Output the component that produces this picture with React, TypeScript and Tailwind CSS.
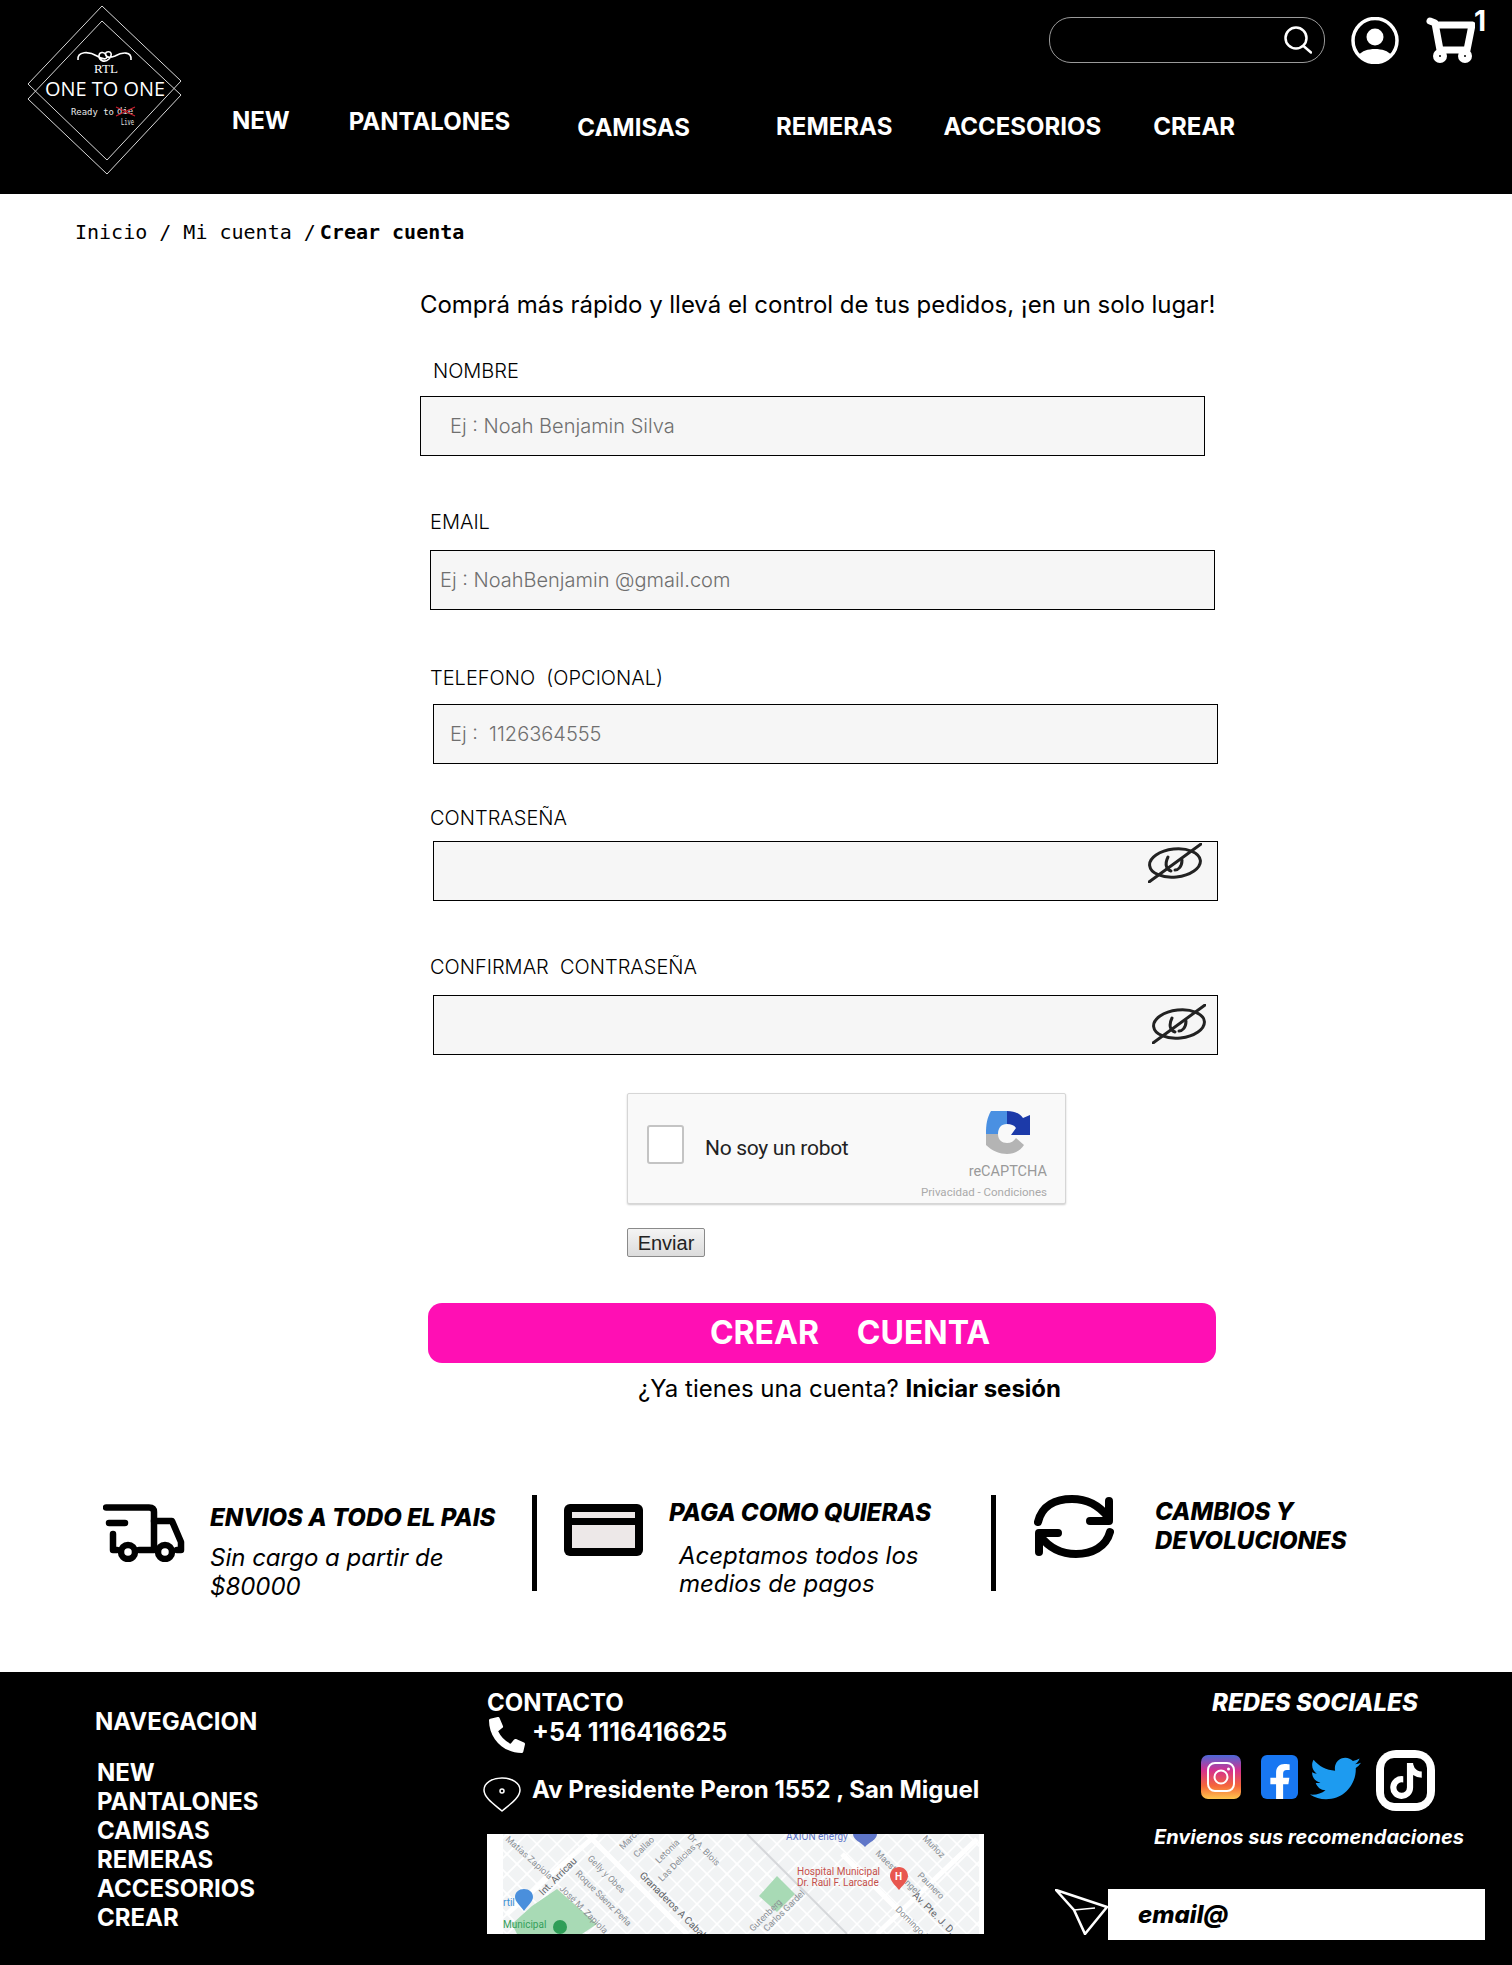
import { FaFacebookF, FaPhoneAlt, FaTiktok, FaTwitter } from 'react-icons/fa';

const navigation = ['NEW', 'PANTALONES', 'CAMISAS', 'REMERAS', 'ACCESORIOS', 'CREAR'];

const Logo = () => (
  <svg width="156" height="170" viewBox="0 0 156 170" className="block">
    <g fill="none" stroke="#d8d8d8" strokeWidth="1">
      <polygon points="75,1 154,76 80,155 1,79" />
      <polygon points="75,16 1,94 80,169 154,90" />
    </g>
    <path d="M51 55 C50 46 62 46 70 51 C76 55 82 55 79 50 C77 46 72 47 72 51 C72 56 78 58 82 54 C86 49 84 46 80 47 C77 48 78 55 88 51 C95 47 105 46 104 55" fill="none" stroke="#fff" strokeWidth="1.6" />
    <text x="79" y="68" fill="#fff" fontSize="13" textAnchor="middle" fontFamily="Liberation Serif, serif">RTL</text>
    <text x="78" y="91" fill="#fff" fontSize="20" textAnchor="middle" textLength="120" lengthAdjust="spacingAndGlyphs" fontFamily="Open Sans, sans-serif">ONE TO ONE</text>
    <text x="44" y="110" fill="#e8e8e8" fontSize="9" textLength="43" lengthAdjust="spacingAndGlyphs" fontFamily="DejaVu Sans Mono, monospace">Ready to</text>
    <text x="90" y="109" fill="#e8e8e8" fontSize="9" fontFamily="DejaVu Sans Mono, monospace">die</text>
    <path d="M89 102 L108 111 M89 111 L108 102" stroke="#c81e2e" strokeWidth="1.2" />
    <text x="94" y="120" fill="#e8e8e8" fontSize="8" textLength="13" lengthAdjust="spacingAndGlyphs" fontFamily="DejaVu Sans Mono, monospace">Live</text>
  </svg>
);

const SearchIcon = () => (
  <svg width="28" height="28" viewBox="0 0 28 28" fill="none" stroke="#fff" strokeWidth="2.5" strokeLinecap="round">
    <circle cx="12" cy="12" r="10.5" />
    <path d="M19.5 20 L27 26.5" />
  </svg>
);

const UserIcon = () => (
  <svg width="48" height="47" viewBox="0 0 48 47">
    <circle cx="24" cy="23.5" r="22" fill="none" stroke="#fff" strokeWidth="3.5" />
    <circle cx="24" cy="20" r="8.5" fill="#fff" />
    <path d="M8 38 C13 30 35 30 40 38 C32 48 16 48 8 38 Z" fill="#fff" />
  </svg>
);

const CartIcon = () => (
  <svg width="50" height="48" viewBox="0 0 50 48">
    <path d="M5 4 L10 6 L15 33 H42 L47 8 H11" fill="none" stroke="#fff" strokeWidth="7" strokeLinecap="round" strokeLinejoin="round" />
    <circle cx="15" cy="39" r="7" fill="#fff" />
    <circle cx="40" cy="39" r="7" fill="#fff" />
    <circle cx="15" cy="39" r="1" fill="#000" />
    <circle cx="40" cy="39" r="1" fill="#000" />
  </svg>
);

const EyeOff = () => (
  <svg width="54" height="40" viewBox="0 0 54 40" fill="none" stroke="#222" strokeWidth="3" strokeLinecap="round">
    <ellipse cx="27" cy="20" rx="25.5" ry="14" transform="rotate(-6 27 20)" />
    <path d="M1 39 L53 1" />
    <path d="M20 14 C16 22 19 27 23 28 M34 17 C34 24 30 27 27 27" />
  </svg>
);

const TruckIcon = () => (
  <svg width="82" height="58" viewBox="0 0 82 58" fill="none" stroke="#000" strokeWidth="6.5" strokeLinecap="round" strokeLinejoin="round">
    <path d="M3 3.5 H46 Q51 3.5 51 8 V46 H36" />
    <path d="M6 19 H22" />
    <path d="M10 30 V46 H14" />
    <path d="M51 17 H69 L78 38 V46 H74" />
    <circle cx="25" cy="48" r="7" />
    <circle cx="62" cy="48" r="7" />
  </svg>
);

const CardIcon = () => (
  <div className="w-[79px] h-[52px] bg-black rounded-[6px] px-[8px] pt-[8px] pb-[8px] flex flex-col gap-[7px]">
    <div className="h-[6px] bg-[#ede8e8]" />
    <div className="h-[23px] bg-[#ede8e8]" />
  </div>
);

const RefreshIcon = () => (
  <svg width="80" height="63" viewBox="0 0 80 63" fill="none" stroke="#000" strokeWidth="8" strokeLinecap="round" strokeLinejoin="round">
    <path d="M4 27 C8 10 22 4 38 4 C52 4 64 9 74 22" />
    <path d="M75 6 V26 H56" />
    <path d="M76 37 C72 52 58 59 42 59 C28 59 16 54 6 41" />
    <path d="M5 57 V38 H24" />
  </svg>
);

const PinIcon = () => (
  <svg width="38" height="35" viewBox="0 0 38 35" fill="none" stroke="#fff" strokeWidth="1.5">
    <path d="M19 1 C29 1 37 6 37 13 C37 21 26 28 19 34 C12 28 1 21 1 13 C1 6 9 1 19 1 Z" />
    <circle cx="19" cy="14" r="2" />
  </svg>
);

const PlaneIcon = () => (
  <svg width="53" height="46" viewBox="0 0 53 46" fill="none" stroke="#fff" strokeWidth="2.6" strokeLinejoin="round">
    <path d="M1 1 L52 18 L30 45 L19 21 Z" />
    <path d="M19 21 L40 19" strokeWidth="1.6" />
  </svg>
);

const InstagramIcon = () => (
  <svg width="40" height="44" viewBox="0 0 40 44">
    <defs>
      <linearGradient id="ig" x1="0" y1="1" x2="0" y2="0">
        <stop offset="0" stopColor="#fdc64d" />
        <stop offset="0.3" stopColor="#f5663a" />
        <stop offset="0.65" stopColor="#d5318f" />
        <stop offset="1" stopColor="#4c68d7" />
      </linearGradient>
    </defs>
    <rect width="40" height="44" rx="7" fill="url(#ig)" />
    <rect x="7" y="8" width="26" height="28" rx="7" fill="none" stroke="#fff" strokeWidth="2" />
    <circle cx="20" cy="22" r="6.5" fill="none" stroke="#fff" strokeWidth="2" />
    <circle cx="27.5" cy="14" r="1.5" fill="#fff" />
  </svg>
);

const RecaptchaLogo = () => (
  <svg width="46" height="44" viewBox="0 0 46 44">
    <path d="M6 1 L22 1 L22 14 C16 14 13 18 13 24 H1 C1 14 2 8 6 1 Z" fill="#4a90e2" />
    <path d="M22 1 C30 1 35 4 38 8 L45 5 V25 H26 L31 18 C29 15 26 14 22 14 Z" fill="#1c3aa9" />
    <path d="M1 24 H13 C13 30 17 33 22 33 C26 33 29 31 31 28 L39 35 C35 41 29 44 22 44 C15 44 7 41 1 35 Z" fill="#b4b4b4" />
    <rect x="1" y="24" width="8" height="11" fill="#b4b4b4" />
  </svg>
);

const StaticMap = () => {
  const roads = Array.from({ length: 34 }, (_, i) => -100 + i * 20);
  return (
    <svg width="497" height="100" viewBox="0 0 497 100" className="block bg-white">
      <rect x="16" width="476" height="100" fill="#f1f3f4" />
      <g stroke="#fff" strokeWidth="1.6">
        {roads.map((r) => (
          <path key={`a${r}`} d={`M${r} 0 L${r + 100} 100`} />
        ))}
        {roads.map((r) => (
          <path key={`b${r}`} d={`M${r + 60} 0 L${r - 40} 100`} />
        ))}
      </g>
      <path d="M100 0 L200 100 M355 20 L435 100 M20 80 L110 0 M390 100 L490 5" stroke="#fff" strokeWidth="5" />
      <path d="M260 0 L360 100" stroke="#d5d7da" strokeWidth="2" />
      <polygon points="45,72 70,55 110,90 95,100 30,100 25,90" fill="#a8dab5" />
      <polygon points="272,62 290,42 308,60 290,78" fill="#a8dab5" />
      <g fill="#8a8f94" fontSize="9" fontFamily="Roboto, sans-serif">
        <text x="18" y="6" transform="rotate(42 18 6)">Matías Zapiola</text>
        <text x="100" y="25" transform="rotate(45 100 25)">Gelly y Obes</text>
        <text x="88" y="40" transform="rotate(45 88 40)">Roque Sáenz Peña</text>
        <text x="72" y="55" transform="rotate(45 72 55)">José M. Zapiola</text>
        <text x="136" y="16" transform="rotate(-45 136 16)">Marcos</text>
        <text x="150" y="24" transform="rotate(-45 150 24)">Callao</text>
        <text x="172" y="30" transform="rotate(-45 172 30)">Letonia</text>
        <text x="175" y="48" transform="rotate(-45 175 48)">Las Delicias</text>
        <text x="200" y="3" transform="rotate(45 200 3)">Dr A. Blois</text>
        <text x="388" y="20" transform="rotate(45 388 20)">Maestro Ángel</text>
        <text x="435" y="5" transform="rotate(45 435 5)">Muñoz</text>
        <text x="430" y="42" transform="rotate(45 430 42)">Paunero</text>
        <text x="408" y="76" transform="rotate(45 408 76)">Domingo F.</text>
        <text x="266" y="98" transform="rotate(-45 266 98)">Gutenberg</text>
        <text x="280" y="98" transform="rotate(-45 280 98)">Carlos Gardel</text>
      </g>
      <g fill="#5f6368" fontSize="10" fontFamily="Roboto, sans-serif">
        <text x="152" y="42" transform="rotate(45 152 42)">Granaderos A Caball</text>
        <text x="425" y="62" transform="rotate(45 425 62)">Av. Pte. J. D.</text>
        <text x="56" y="62" transform="rotate(-45 56 62)">Int. Arricau</text>
      </g>
      <text x="310" y="41" fill="#c5504a" fontSize="10" fontFamily="Roboto, sans-serif">Hospital Municipal</text>
      <text x="310" y="52" fill="#c5504a" fontSize="10" fontFamily="Roboto, sans-serif">Dr. Raúl F. Larcade</text>
      <path d="M412 33 C417 33 421 37 421 42 C421 47 415 52 412 56 C409 52 403 47 403 42 C403 37 407 33 412 33 Z" fill="#e8574f" />
      <text x="408" y="46" fill="#fff" fontSize="10" fontWeight="700" fontFamily="Roboto, sans-serif">H</text>
      <text x="299" y="6" fill="#5f76c8" fontSize="10" fontFamily="Roboto, sans-serif">AXION energy</text>
      <path d="M366 0 H390 C390 6 382 8 378 13 C374 8 366 6 366 0 Z" fill="#5f76c8" />
      <text x="16" y="72" fill="#3c8fd5" fontSize="10" fontFamily="Roboto, sans-serif">rtil</text>
      <path d="M37 55 C42 55 46 58 46 63 C46 68 40 72 37 77 C34 72 28 68 28 63 C28 58 32 55 37 55 Z" fill="#4a8fdc" />
      <text x="16" y="94" fill="#34a05a" fontSize="10" fontFamily="Roboto, sans-serif">Municipal</text>
      <circle cx="73" cy="93" r="7" fill="#2f9e57" />
    </svg>
  );
};

const Field = ({ label, placeholder, labelClass, boxClass, eye }: { label: string; placeholder?: string; labelClass: string; boxClass: string; eye?: string }) => (
  <div>
    <div className={`text-[20px] leading-6 font-light text-black whitespace-pre ${labelClass}`}>{label}</div>
    <div className={`h-[60px] w-[785px] bg-[#f6f6f6] border border-black flex items-center ${boxClass}`}>
      <span className="text-[20px] font-light text-[#6f6f6f] whitespace-pre">{placeholder}</span>
      {eye && (
        <span className={eye}>
          <EyeOff />
        </span>
      )}
    </div>
  </div>
);

export default function App() {
  return (
    <div className="w-[1512px] h-[1965px] overflow-hidden bg-white font-['Inter',sans-serif]">
      <header className="h-[194px] bg-black flex text-white">
        <div className="ml-[27px] mt-[5px]">
          <Logo />
        </div>
        <div className="flex-1">
          <div className="flex items-start h-[104px] pl-[866px] pt-[17px]">
            <div className="w-[276px] h-[46px] border border-[#9a9a9a] rounded-[22px] flex items-center justify-end pr-[12px]">
              <SearchIcon />
            </div>
            <div className="ml-[26px]">
              <UserIcon />
            </div>
            <div className="ml-[26px]">
              <CartIcon />
            </div>
            <span className="text-[28px] font-bold leading-[30px] -mt-[11px] -ml-[1px]">1</span>
          </div>
          <nav className="flex items-start text-[24px] font-bold leading-[30px]">
            <span className="ml-[49px] mt-[2px]">NEW</span>
            <span className="ml-[59px] mt-[3px]">PANTALONES</span>
            <span className="ml-[67px] mt-[9px]">CAMISAS</span>
            <span className="ml-[86px] mt-[8px]">REMERAS</span>
            <span className="ml-[51px] mt-[8px]">ACCESORIOS</span>
            <span className="ml-[52px] mt-[8px]">CREAR</span>
          </nav>
        </div>
      </header>

      <div className="pl-[75px] mt-[24px] h-[28px] flex items-center whitespace-pre text-black font-['DejaVu_Sans_Mono',monospace]">
        <span className="text-[20px]">Inicio / Mi cuenta /</span>
        <span className="text-[20px] font-bold ml-[4px]">Crear cuenta</span>
      </div>

      <main className="pl-[420px]">
        <p className="mt-[43px] text-[24px] leading-8 text-black whitespace-nowrap tracking-[-0.03px]">Comprá más rápido y llevá el control de tus pedidos, ¡en un solo lugar!</p>
        <div className="mt-[38px]">
          <Field label="NOMBRE" placeholder="Ej : Noah Benjamin Silva" labelClass="ml-[13px] mb-[13px]" boxClass="pl-[29px]" />
        </div>
        <div className="mt-[54px]">
          <Field label="EMAIL" placeholder="Ej : NoahBenjamin @gmail.com" labelClass="ml-[10px] mb-[16px]" boxClass="ml-[10px] pl-[9px]" />
        </div>
        <div className="mt-[56px]">
          <Field label="TELEFONO  (OPCIONAL)" placeholder="Ej :  1126364555" labelClass="ml-[10px] mb-[14px]" boxClass="ml-[13px] pl-[16px]" />
        </div>
        <div className="mt-[42px]">
          <Field label="CONTRASEÑA" labelClass="ml-[10px] mb-[11px]" boxClass="ml-[13px] justify-end" eye="mr-[15px] -mt-[16px]" />
        </div>
        <div className="mt-[54px]">
          <Field label="CONFIRMAR  CONTRASEÑA" labelClass="ml-[10px] mb-[16px]" boxClass="ml-[13px] justify-end" eye="mr-[11px] -mt-[2px]" />
        </div>

        <div className="mt-[38px] ml-[207px] w-[439px] h-[111px] bg-[#f9f9f9] border border-[#d6d6d6] rounded-[2px] shadow-[0_1px_2px_rgba(0,0,0,0.2)] flex font-['Roboto',sans-serif]">
          <div className="ml-[19px] mt-[31px] w-[37px] h-[39px] bg-white border-2 border-[#c4c4c4] rounded-[3px]" />
          <span className="ml-[21px] mt-[42px] text-[21px] leading-6 text-[#222] tracking-[-0.3px]">No soy un robot</span>
          <div className="ml-auto mr-[18px] flex flex-col items-end text-[#9a9a9a]">
            <div className="mt-[16px] mr-[16px]">
              <RecaptchaLogo />
            </div>
            <span className="text-[14.5px] leading-4 mt-[10px]">reCAPTCHA</span>
            <span className="text-[11.5px] leading-3 mt-[6px] text-[#aaa] whitespace-nowrap">Privacidad - Condiciones</span>
          </div>
        </div>
        <button className="mt-[24px] ml-[207px] w-[78px] h-[29px] block bg-gradient-to-b from-[#f4f4f4] to-[#dcdcdc] border border-[#8a8a8a] rounded-[2px] text-[20px] leading-none text-[#222] font-['Liberation_Sans',sans-serif]">Enviar</button>
        <button className="mt-[46px] ml-[8px] pl-[56px] w-[788px] h-[60px] block bg-[#ff0fb4] rounded-[14px] text-[32px] font-bold text-white whitespace-pre">CREAR     CUENTA</button>
        <p className="mt-[10px] ml-[218px] text-[24px] leading-8 text-black whitespace-nowrap">
          ¿Ya tienes una cuenta? <span className="font-bold">Iniciar sesión</span>
        </p>
      </main>

      <section className="mt-[90px] flex h-[97px] items-start text-black">
        <div className="w-[532px] pl-[103px] flex items-start">
          <div className="mt-[9px]">
            <TruckIcon />
          </div>
          <div className="ml-[25px] mt-[9px]">
            <h3 className="text-[24px] leading-7 font-extrabold italic whitespace-nowrap">ENVIOS A TODO EL PAIS</h3>
            <p className="mt-[11px] text-[24px] leading-[29px] font-normal italic w-[300px]">Sin cargo a partir de $80000</p>
          </div>
        </div>
        <div className="w-[5px] h-[96px] bg-black" />
        <div className="w-[454px] pl-[27px] flex items-start">
          <div className="mt-[9px]">
            <CardIcon />
          </div>
          <div className="ml-[26px] mt-[4px]">
            <h3 className="text-[24px] leading-7 font-extrabold italic whitespace-nowrap">PAGA COMO QUIERAS</h3>
            <p className="mt-[15px] ml-[10px] text-[24px] leading-[28px] font-normal italic w-[300px]">Aceptamos todos los medios de pagos</p>
          </div>
        </div>
        <div className="w-[5px] h-[96px] bg-black" />
        <div className="pl-[38px] flex items-start">
          <RefreshIcon />
          <h3 className="ml-[41px] mt-[2px] text-[24px] leading-[29px] font-extrabold italic w-[220px]">CAMBIOS Y DEVOLUCIONES</h3>
        </div>
      </section>

      <footer className="mt-[80px] h-[293px] bg-black text-white flex">
        <div className="w-[487px] pl-[95px]">
          <h4 className="mt-[36px] text-[24px] leading-7 font-bold">NAVEGACION</h4>
          <ul className="mt-[22px] ml-[2px] text-[24px] leading-[29px] font-bold">
            {navigation.map((item) => (
              <li key={item}>{item}</li>
            ))}
          </ul>
        </div>
        <div className="w-[568px]">
          <h4 className="mt-[16px] text-[24px] leading-[29px] font-bold">CONTACTO</h4>
          <div className="flex items-start h-[36px]">
            <FaPhoneAlt className="w-[36px] h-[36px] ml-[2px]" />
            <span className="ml-[7px] text-[25px] leading-[30px] font-bold">+54 1116416625</span>
          </div>
          <div className="mt-[24px] -ml-[4px] flex items-start">
            <PinIcon />
            <span className="ml-[11px] -mt-[2px] text-[24px] leading-[30px] font-bold whitespace-nowrap">Av Presidente Peron 1552 , San Miguel</span>
          </div>
          <div className="mt-[22px]">
            <StaticMap />
          </div>
        </div>
        <div className="flex-1">
          <h4 className="mt-[17px] ml-[157px] text-[24px] leading-7 font-extrabold italic whitespace-nowrap">REDES SOCIALES</h4>
          <div className="mt-[33px] ml-[146px] flex items-start">
            <div className="mt-[5px]">
              <InstagramIcon />
            </div>
            <div className="mt-[5px] ml-[20px] w-[37px] h-[44px] bg-[#1877f2] rounded-[6px] overflow-hidden flex justify-center items-end">
              <FaFacebookF className="w-[30px] h-[36px] -mb-[1px] text-white" />
            </div>
            <FaTwitter className="ml-[12px] mt-[3px] w-[51px] h-[51px] text-[#1d9bf0]" />
            <div className="ml-[15px] w-[59px] h-[61px] bg-white rounded-[20px] flex items-center justify-center">
              <div className="w-[43px] h-[45px] bg-black rounded-[10px] flex items-center justify-center">
                <FaTiktok className="w-[32px] h-[36px] text-white" />
              </div>
            </div>
          </div>
          <p className="mt-[13px] ml-[99px] text-[20px] leading-[26px] font-bold italic whitespace-nowrap">Envienos sus recomendaciones</p>
          <div className="mt-[39px] flex items-start">
            <PlaneIcon />
            <div className="w-[377px] h-[51px] bg-white flex items-center pl-[30px] text-black text-[24px] font-extrabold italic">email@</div>
          </div>
        </div>
      </footer>
    </div>
  );
}
